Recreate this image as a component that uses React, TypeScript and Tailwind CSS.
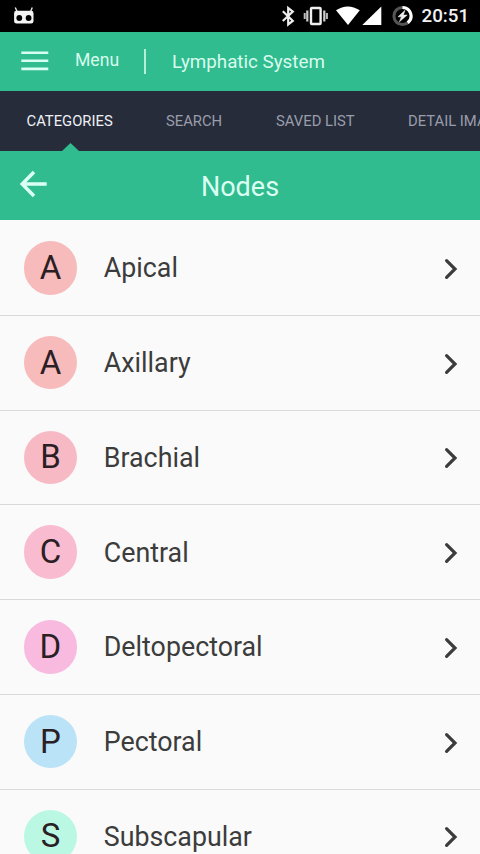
import React from "react";
import clsx from "clsx";

const TABS = [
  { name: "CATEGORIES", active: true, className: "ml-[26.5px] w-[139.5px]" },
  { name: "SEARCH", active: false, className: "w-[110px]" },
  { name: "SAVED LIST", active: false, className: "w-[132px]" },
  { name: "DETAIL IMAGES", active: false, className: "w-[140px]" },
];

const NODES = [
  { name: "Apical", color: "bg-[#f7bbbb]" },
  { name: "Axillary", color: "bg-[#f7bbbb]" },
  { name: "Brachial", color: "bg-[#f7bac5]" },
  { name: "Central", color: "bg-[#f9bbd0]" },
  { name: "Deltopectoral", color: "bg-[#f8bbdf]" },
  { name: "Pectoral", color: "bg-[#bbe3f8]" },
  { name: "Subscapular", color: "bg-[#bbf8e3]" },
];

function StatusBar() {
  return (
    <div className="flex h-8 shrink-0 items-center justify-between bg-black">
      <svg className="ml-[13px] h-8 w-[22px]" viewBox="13 0 22 32">
        <path d="M15.3 7.5l1.7 4M32.3 7.5l-1.7 4" stroke="#e8e8e8" strokeWidth="1.4" />
        <path
          d="M16.5 10.8h14.6q2.4 0 2.4 2.4v8q0 2.4-2.4 2.4H16.5q-2.4 0-2.4-2.4v-8q0-2.4 2.4-2.4z"
          fill="#f4f4f4"
        />
        <circle cx="19.3" cy="18" r="2.9" fill="#000" />
        <circle cx="28.6" cy="18" r="2.9" fill="#000" />
      </svg>
      <div className="flex items-center">
        <svg className="h-8 w-[134px]" viewBox="280 0 134 32">
          <path
            d="M282.8 11.2l10 9.6-4.6 3.6V8l4.6 3.6-10 9.4"
            fill="none"
            stroke="#eee"
            strokeWidth="2.2"
          />
          <rect x="311" y="8" width="9.6" height="16" rx="0.8" fill="none" stroke="#eee" strokeWidth="2.4" />
          <path d="M307.3 10.5v11M324.3 10.5v11" stroke="#ccc" strokeWidth="2.2" />
          <path d="M304.7 13v6M326.9 13v6" stroke="#bbb" strokeWidth="2" />
          <path d="M336 10.2q11.7-7.6 23.8 0L348 25z" fill="#fff" />
          <path d="M381.3 6.5V25h-19z" fill="#fff" />
          <circle cx="402.5" cy="16" r="8.6" fill="none" stroke="#555" strokeWidth="3" />
          <path d="M402.5 7.4a8.6 8.6 0 0 1 5.2 15.4" fill="none" stroke="#fff" strokeWidth="3" />
          <path d="M405 10.3l-7 6.5h3.4l-2 5 7.8-6.7h-3.8z" fill="#eee" stroke="#eee" strokeWidth="0.5" />
        </svg>
        <span className="ml-[7.5px] w-[58.5px] whitespace-nowrap text-[18.8px] leading-8 font-medium text-[#f2f2f2]">
          20:51
        </span>
      </div>
    </div>
  );
}

function Header() {
  return (
    <header className="flex h-[59px] shrink-0 items-center bg-[#30bc8e] text-[#d9fbee]">
      <svg className="ml-[21px] h-[22px] w-[28px]" viewBox="0 0 28 22">
        <path d="M0.3 1.7h27M0.3 9.8h27M0.3 17.9h27" stroke="#d9fff2" strokeWidth="2.6" />
      </svg>
      <span className="ml-[26px] w-[69px] pb-[3px] text-[17.6px] leading-6">Menu</span>
      <span className="h-[25px] w-[1.5px] bg-[#b4efd8]" />
      <span className="ml-[26.5px] text-[18.8px] leading-6">Lymphatic System</span>
    </header>
  );
}

function Tabs() {
  return (
    <nav className="flex h-[60px] shrink-0 overflow-hidden bg-[#262c3a]">
      {TABS.map(({ name, active, className }) => (
        <a
          key={name}
          className={clsx(
            "relative flex shrink-0 items-center pt-px whitespace-nowrap text-[14.8px]",
            className,
            active ? "text-[#eef0f5]" : "text-[#9a9dab]"
          )}
        >
          {name}
          {active && (
            <svg className="absolute bottom-0 left-[35.5px] h-2 w-[17px]" viewBox="0 0 17 8">
              <path d="M8.5 0L17 8H0z" fill="#30bc8e" />
            </svg>
          )}
        </a>
      ))}
    </nav>
  );
}

function TitleBar() {
  return (
    <div className="grid h-[69px] shrink-0 grid-cols-[60px_1fr_60px] items-center bg-[#30bc8e] text-[#dcfff3]">
      <svg className="mb-[3px] ml-5 h-7 w-7" viewBox="0 0 28 28">
        <path d="M26.7 14H2.5M14 2L2.2 14 14 26" fill="none" stroke="#dcfff3" strokeWidth="3.5" />
      </svg>
      <h1 className="pt-[2px] text-center text-[27px] leading-8">Nodes</h1>
    </div>
  );
}

interface NodeRowProps {
  name: string;
  color: string;
}

function NodeRow({ name, color }: NodeRowProps) {
  return (
    <li className="flex h-[94.75px] shrink-0 items-center border-b border-[#d9d9d9]">
      <span
        className={clsx(
          "ml-[23.7px] flex size-[53.5px] items-center justify-center rounded-full pb-px text-[33px] leading-none text-[#2a2024]",
          color
        )}
      >
        {name[0]}
      </span>
      <span className="ml-[26.6px] flex-1 pt-px text-[26.8px] leading-8 text-[#3c3c3c]">{name}</span>
      <svg className="mt-[2px] mr-[22.5px] h-[22px] w-[15px]" viewBox="0 0 15 22">
        <path
          d="M3.6 2.6L12 11l-8.4 8.4"
          fill="none"
          stroke="#3c3c3c"
          strokeWidth="3.2"
          strokeLinecap="round"
        />
      </svg>
    </li>
  );
}

export default function App() {
  return (
    <div className="flex h-[854px] w-[480px] flex-col overflow-hidden bg-[#fafafa] font-['Roboto',sans-serif]">
      <StatusBar />
      <Header />
      <Tabs />
      <TitleBar />
      <ul className="flex min-h-0 flex-1 flex-col overflow-hidden pt-px">
        {NODES.map(({ name, color }) => (
          <NodeRow key={name} name={name} color={color} />
        ))}
      </ul>
    </div>
  );
}
